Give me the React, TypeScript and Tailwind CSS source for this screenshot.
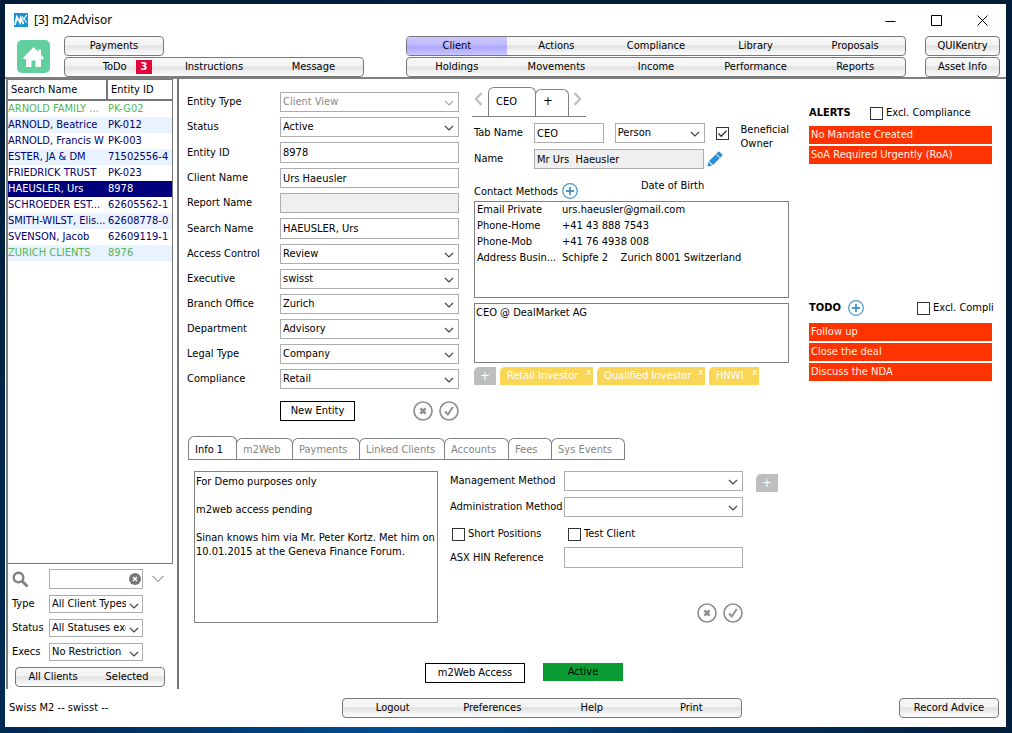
import { useId, useState, type ReactNode } from "react";

const clients = [
    { name: "ARNOLD FAMILY ...", id: "PK-G02", group: true },
    { name: "ARNOLD, Beatrice", id: "PK-012" },
    { name: "ARNOLD, Francis W", id: "PK-003" },
    { name: "ESTER, JA & DM", id: "71502556-4" },
    { name: "FRIEDRICK TRUST", id: "PK-023" },
    { name: "HAEUSLER, Urs", id: "8978" },
    { name: "SCHROEDER EST...", id: "62605562-1" },
    { name: "SMITH-WILST, Elis...", id: "62608778-0" },
    { name: "SVENSON, Jacob", id: "62609119-1" },
    { name: "ZURICH CLIENTS", id: "8976", group: true },
];

const contacts = [
    ["Email Private", "urs.haeusler@gmail.com"],
    ["Phone-Home", "+41 43 888 7543"],
    ["Phone-Mob", "+41 76 4938 008"],
    ["Address Busin...", "Schipfe 2    Zurich 8001 Switzerland"],
];

const infoTabs = [
    { label: "Info 1", width: "w-[49px]" },
    { label: "m2Web", width: "w-[57px]" },
    { label: "Payments", width: "w-[68px]" },
    { label: "Linked Clients", width: "w-[86px]" },
    { label: "Accounts", width: "w-[65px]" },
    { label: "Fees", width: "w-[44px]" },
    { label: "Sys Events", width: "w-[74px]" },
];

const silver = "bg-[linear-gradient(to_bottom,#f8f8f8_0%,#f3f3f3_42%,#e1e1e1_50%,#f0f0f0_75%,#fcfcfc_100%)]";

function ButtonBar({ items, active, badge }: { items: string[]; active?: string; badge?: number }) {
    return (
        <div className={`flex h-5 overflow-hidden rounded-[4px] border border-[#777] ${silver}`}>
            {items.map((item, i) => (
                <button
                    key={item}
                    className={`relative flex-1 whitespace-nowrap ${item === active ? "bg-[linear-gradient(to_bottom,#c9c6ff_0%,#c1bdff_40%,#aca7fd_55%,#c8c5ff_100%)]" : ""}`}
                >
                    {item}
                    {badge && i === 0 && (
                        <span className="absolute left-[71px] top-0.5 h-3.5 w-4 bg-[#e2063c] text-center font-bold leading-[14px] text-white">{badge}</span>
                    )}
                </button>
            ))}
        </div>
    );
}

function Chevron({ className = "" }: { className?: string }) {
    return (
        <svg viewBox="0 0 10 6" className={`h-1.5 w-2.5 ${className}`} fill="none" stroke="currentColor" strokeWidth="1.2">
            <path d="M1 1l4 4 4-4" />
        </svg>
    );
}

function Select({ id, value, disabled, small }: { id?: string; value: string; disabled?: boolean; small?: boolean }) {
    return (
        <div className={`relative w-full ${disabled ? "text-[#8a8a8a]" : "text-black"}`}>
            <select
                id={id}
                disabled={disabled}
                defaultValue={value}
                aria-label={id ? undefined : value || "Options"}
                className={`block w-full appearance-none border border-[#adadad] bg-white pl-0.5 opacity-100 ${small ? "h-[18px] pr-4" : "h-5 pr-5"}`}
            >
                <option>{value}</option>
            </select>
            <Chevron className={`pointer-events-none absolute top-2 ${small ? "right-1" : "right-[5px]"} ${disabled ? "text-[#aaa]" : "text-[#444]"}`} />
        </div>
    );
}

function TextInput({ id, value = "", grey, tall }: { id: string; value?: string; grey?: boolean; tall?: boolean }) {
    return (
        <input
            id={id}
            defaultValue={value}
            readOnly={grey}
            className={`block w-full border border-[#adadad] px-0.5 outline-none ${tall ? "h-[21px]" : "h-5"} ${grey ? "bg-[#efefef]" : "bg-white"}`}
        />
    );
}

function Check({ label, checked = false, children }: { label: string; checked?: boolean; children?: ReactNode }) {
    return (
        <label className={`flex gap-[3px] whitespace-nowrap ${children ? "items-start" : "items-center"}`}>
            <span className={`relative h-[13px] w-[13px] shrink-0 ${children ? "mt-1" : ""}`}>
                <input type="checkbox" defaultChecked={checked} aria-label={label} className="peer block h-[13px] w-[13px] appearance-none border border-[#333] bg-white" />
                <svg viewBox="0 0 13 13" className="pointer-events-none absolute inset-0 hidden h-[13px] w-[13px] peer-checked:block" fill="none" stroke="#333" strokeWidth="1.3">
                    <path d="M2.5 6.5l2.7 2.8L10.5 3.8" />
                </svg>
            </span>
            {children ?? label}
        </label>
    );
}

function Field({ label, value, type = "select", tall }: { label: string; value?: string; type?: "select" | "text" | "readonly" | "disabled"; tall?: boolean }) {
    const id = useId();
    return (
        <div className="flex items-center">
            <label htmlFor={id} className="w-[93px] shrink-0">{label}</label>
            {type === "select" || type === "disabled" ? (
                <Select id={id} value={value ?? ""} disabled={type === "disabled"} />
            ) : (
                <TextInput id={id} value={value} grey={type === "readonly"} tall={tall} />
            )}
        </div>
    );
}

function CancelConfirm() {
    return (
        <div className="flex gap-1.5">
            <button aria-label="Cancel">
                <svg viewBox="0 0 20 20" className="h-5 w-5" fill="none" stroke="#8f8f8f">
                    <circle cx="10" cy="10" r="9" strokeWidth="1.7" />
                    <path d="M7.4 7.4l5.2 5.2M12.6 7.4l-5.2 5.2" strokeWidth="2.6" />
                </svg>
            </button>
            <button aria-label="Confirm">
                <svg viewBox="0 0 20 20" className="h-5 w-5" fill="none" stroke="#8f8f8f">
                    <circle cx="10" cy="10" r="9" strokeWidth="1.7" />
                    <path d="M6 10.5l2.8 3L13.8 6" strokeWidth="1.9" />
                </svg>
            </button>
        </div>
    );
}

function AddCircle({ label }: { label: string }) {
    return (
        <button aria-label={label}>
            <svg viewBox="0 0 16 16" className="h-4 w-4" fill="none" stroke="#4795c9">
                <circle cx="8" cy="8" r="7.3" strokeWidth="1.2" />
                <path d="M8 4v8M4 8h8" strokeWidth="1.8" />
            </svg>
        </button>
    );
}

function AddTag() {
    return <button aria-label="Add" className="h-[18px] w-[22px] rounded-tl-[5px] bg-[#bebebe] text-[13px] leading-[18px] text-white">+</button>;
}

function Tag({ label, width }: { label: string; width: string }) {
    return (
        <div className={`relative h-[18px] shrink-0 rounded-tl-[5px] bg-[#fad657] pl-[7px] leading-[17px] text-white ${width}`}>
            {label}
            <button aria-label={`Remove ${label}`} className="absolute right-0.5 top-0 text-[9px] leading-[10px]">x</button>
        </div>
    );
}

function AlertList({ items }: { items: string[] }) {
    return (
        <ul className="flex flex-col gap-0.5">
            {items.map((item) => (
                <li key={item} className="h-[18px] truncate bg-[#ff3300] pl-0.5 leading-[18px] text-[#fff1e6]">{item}</li>
            ))}
        </ul>
    );
}

function TitleBar() {
    return (
        <header className="flex h-8 items-center pl-[9px] pr-px font-['Noto_Sans',sans-serif] text-xs">
            <svg viewBox="0 0 14 14" className="h-3.5 w-3.5">
                <rect width="14" height="14" fill="#1394d6" />
                <path d="M1 12l1.8-8L6 9.5 6.7 5l2.8 6" fill="none" stroke="#fff" strokeWidth="1.8" />
                <path d="M8 3.2l1.5 3 3.5-4.4M10.4 6.2l2.3 3.6" fill="none" stroke="#fff" strokeWidth="1.1" />
            </svg>
            <h1 className="ml-1.5 flex-1">[3] m2Advisor</h1>
            <button aria-label="Minimize" className="flex w-[46px] justify-center">
                <svg viewBox="0 0 11 11" className="h-[11px] w-[11px]" stroke="#000"><path d="M.5 6.5h10" /></svg>
            </button>
            <button aria-label="Maximize" className="flex w-[46px] justify-center">
                <svg viewBox="0 0 11 11" className="h-[11px] w-[11px]" fill="none" stroke="#000"><path d="M.5 .5h10v10H.5z" /></svg>
            </button>
            <button aria-label="Close" className="flex w-[46px] justify-center">
                <svg viewBox="0 0 11 11" className="h-[11px] w-[11px]" stroke="#000"><path d="M.5 .5l10 10M10.5 .5l-10 10" /></svg>
            </button>
        </header>
    );
}

function Toolbar() {
    return (
        <nav className="flex items-start border-b-2 border-[#808080] pl-3 pr-1.5">
            <button aria-label="Home" className="mt-1">
                <svg viewBox="0 0 33 33" className="h-[33px] w-[33px]">
                    <rect width="33" height="33" rx="5" fill="#62cf9f" />
                    <path d="M16.5 7L6 18l1.5 1.500L9 18.200V27h5.500v-6.500h4V27H24v-8.800l1.500 1.300L27 18l-3-3V9.500h-2.500v2.500z" fill="#fff" />
                </svg>
            </button>
            <div className="ml-3.5 flex w-[300px] shrink-0 flex-col gap-px">
                <div className="w-[100px]"><ButtonBar items={["Payments"]} /></div>
                <ButtonBar items={["ToDo", "Instructions", "Message"]} badge={3} />
            </div>
            <div className="ml-[42px] flex flex-1 flex-col gap-px">
                <ButtonBar items={["Client", "Actions", "Compliance", "Library", "Proposals"]} active="Client" />
                <ButtonBar items={["Holdings", "Movements", "Income", "Performance", "Reports"]} />
            </div>
            <div className="ml-[19px] flex w-[75px] shrink-0 flex-col gap-px">
                <ButtonBar items={["QUIKentry"]} />
                <ButtonBar items={["Asset Info"]} />
            </div>
        </nav>
    );
}

function FilterRow({ label, value }: { label: string; value: string }) {
    const id = useId();
    return (
        <div className="flex items-center">
            <label htmlFor={id} className="w-[37px] shrink-0">{label}</label>
            <div className="w-[94px] overflow-hidden"><Select id={id} value={value} small /></div>
        </div>
    );
}

function Sidebar() {
    const [selected, setSelected] = useState("8978");
    return (
        <aside className="ml-px flex w-[167px] shrink-0 flex-col border-l-2 border-[#808080]">
            <div className="flex-1 border border-l-0 border-[#777] pb-2">
                <table className="w-full table-fixed border-collapse">
                    <thead>
                        <tr className="h-5 border-b-2 border-[#777] text-left">
                            <th className="w-[99px] border-r-2 border-[#777] pl-[3px] font-normal">Search Name</th>
                            <th className="pl-[3px] font-normal">Entity ID</th>
                        </tr>
                    </thead>
                    <tbody>
                        {clients.map((c, i) => (
                            <tr
                                key={c.id}
                                onClick={() => setSelected(c.id)}
                                className={`h-4 leading-4 ${c.id === selected ? "bg-[#00007c] text-white" : `${i % 2 ? "bg-[#e8f3ff]" : "bg-white"} ${c.group ? "text-[#55b555]" : "text-[#00006e]"}`}`}
                            >
                                <td className="whitespace-nowrap p-0">{c.name}</td>
                                <td className="whitespace-nowrap p-0 pl-px">{c.id}</td>
                            </tr>
                        ))}
                    </tbody>
                </table>
            </div>
            <div className="flex flex-col gap-1.5 pb-0.5 pl-1 pt-[5px]">
                <div className="flex items-center">
                    <svg viewBox="0 0 17 17" className="h-[17px] w-[17px]" fill="none" stroke="#808080">
                        <circle cx="6.5" cy="6.5" r="4.8" strokeWidth="2.4" />
                        <path d="M10.3 10.3L15.5 15.5" strokeWidth="3" />
                    </svg>
                    <div className="relative ml-5 w-[94px]">
                        <input aria-label="Search clients" className="block h-5 w-full border border-[#adadad] bg-white pl-0.5 pr-4" />
                        <button aria-label="Clear search" className="absolute right-0.5 top-1">
                            <svg viewBox="0 0 12 12" className="h-3 w-3" stroke="#fff">
                                <circle cx="6" cy="6" r="6" fill="#777" stroke="none" />
                                <path d="M4 4l4 4M8 4l-4 4" strokeWidth="1.5" />
                            </svg>
                        </button>
                    </div>
                    <button aria-label="More filters" className="ml-[9px]">
                        <svg viewBox="0 0 12 8" className="h-2 w-3" fill="none" stroke="#666"><path d="M.5 1L6 6.500 11.500 1" /></svg>
                    </button>
                </div>
                <FilterRow label="Type" value="All Client Types" />
                <FilterRow label="Status" value="All Statuses exc" />
                <FilterRow label="Execs" value="No Restriction" />
                <div className="ml-[3px] w-[150px]"><ButtonBar items={["All Clients", "Selected"]} /></div>
            </div>
        </aside>
    );
}

function EntityForm() {
    return (
        <section className="flex w-[272px] shrink-0 flex-col gap-[5px]">
            <Field label="Entity Type" value="Client View" type="disabled" />
            <Field label="Status" value="Active" />
            <Field label="Entity ID" value="8978" type="text" tall />
            <Field label="Client Name" value="Urs Haeusler" type="text" />
            <Field label="Report Name" type="readonly" />
            <Field label="Search Name" value="HAEUSLER, Urs" type="text" tall />
            <Field label="Access Control" value="Review" />
            <Field label="Executive" value="swisst" />
            <Field label="Branch Office" value="Zurich" />
            <Field label="Department" value="Advisory" />
            <Field label="Legal Type" value="Company" />
            <Field label="Compliance" value="Retail" />
            <div className="mt-[7px] flex items-center justify-between pl-[93px]">
                <button className="h-5 w-[75px] border border-black">New Entity</button>
                <CancelConfirm />
            </div>
        </section>
    );
}

function ContactPanel() {
    return (
        <section className="-mt-[5px] ml-[13px] min-w-0 flex-[317]">
            <div className="flex w-[114px] items-end border-b border-[#808080]">
                <button aria-label="Previous tab" className="mb-2.5 ml-0.5 w-3.5">
                    <svg viewBox="0 0 9 14" className="h-3.5 w-[9px]" fill="none" stroke="#c2c2c2" strokeWidth="2.5"><path d="M7.5 1L2 7l5.5 6" /></svg>
                </button>
                <button className="h-[29px] w-12 rounded-t-[6px] border border-b-0 border-[#808080] pl-[7px] text-left">CEO</button>
                <button className="-ml-px h-[27px] w-[34px] rounded-t-[6px] border border-b-0 border-[#808080] pb-1 pl-[7px] text-left text-[13px]">+</button>
                <button aria-label="Next tab" className="mb-2.5 ml-1">
                    <svg viewBox="0 0 9 14" className="h-3.5 w-[9px]" fill="none" stroke="#c2c2c2" strokeWidth="2.5"><path d="M1.5 1L7 7l-5.5 6" /></svg>
                </button>
            </div>
            <div className="mt-1.5 flex items-start pl-0.5">
                <label htmlFor="tab-name" className="w-[60px] shrink-0 leading-5">Tab Name</label>
                <div className="w-[70px]"><TextInput id="tab-name" value="CEO" /></div>
                <div className="ml-[11px] w-[90px]"><Select value="Person" /></div>
                <div className="ml-[11px] h-[26px]">
                    <Check label="Beneficial Owner" checked>
                        <span className="ml-[9px] whitespace-normal leading-[14px]">Beneficial<br />Owner</span>
                    </Check>
                </div>
            </div>
            <div className="flex items-center pl-0.5">
                <label htmlFor="person-name" className="w-[60px] shrink-0">Name</label>
                <div className="w-[170px]"><TextInput id="person-name" value="Mr Urs  Haeusler" grey /></div>
                <button aria-label="Edit name" className="ml-[3px]">
                    <svg viewBox="0 0 16 16" className="h-4 w-4" fill="#2f8fd8">
                        <path d="M.5 15.500l1-4.700 3.700 3.700z" />
                        <path d="M2 10l6.800-6.800 4 4L6 14z" />
                        <path d="M9.300 2.700L11.200.8q.6-.6 1.200 0l2.800 2.800q.6.600 0 1.200l-1.900 1.900z" />
                    </svg>
                </button>
            </div>
            <div className="flex h-8 items-end pb-0.5 pl-0.5">
                <h2 className="mr-1">Contact Methods</h2>
                <AddCircle label="Add contact method" />
                <span className="mb-1.5 ml-[63px]">Date of Birth</span>
            </div>
            <div className="ml-0.5 h-[97px] overflow-hidden border border-[#808080]">
                <table className="w-full border-collapse">
                    <tbody>
                        {contacts.map(([kind, value]) => (
                            <tr key={kind} className="h-4 leading-4">
                                <td className="w-[87px] whitespace-nowrap p-0 pl-0.5">{kind}</td>
                                <td className="whitespace-pre p-0">{value}</td>
                            </tr>
                        ))}
                    </tbody>
                </table>
            </div>
            <div className="ml-0.5 mt-[5px]">
                <textarea aria-label="Position" defaultValue="CEO @ DealMarket AG" className="block h-[60px] w-full resize-none border border-[#808080] px-px py-0.5 leading-[14px]" />
            </div>
            <div className="ml-0.5 mt-1 flex gap-1">
                <AddTag />
                <Tag label="Retail Investor" width="w-[93px]" />
                <Tag label="Qualified Investor" width="w-[108px]" />
                <Tag label="HNWI" width="w-[50px]" />
            </div>
        </section>
    );
}

function AlertsPanel() {
    return (
        <section className="ml-5 mt-3.5 min-w-0 flex-[183]">
            <div className="mb-1.5 flex h-3.5 items-center">
                <h2 className="w-[61px] shrink-0 font-bold">ALERTS</h2>
                <Check label="Excl. Compliance" />
            </div>
            <AlertList items={["No Mandate Created", "SoA Required Urgently (RoA)"]} />
            <div className="mb-[7px] mt-[136px] flex h-4 items-center">
                <h2 className="w-[39px] shrink-0 font-bold">TODO</h2>
                <AddCircle label="Add to do" />
                <div className="ml-[53px]"><Check label="Excl. Compli" /></div>
            </div>
            <AlertList items={["Follow up", "Close the deal", "Discuss the NDA"]} />
        </section>
    );
}

function InfoTabs() {
    const [tab, setTab] = useState("Info 1");
    const ids = { management: useId(), administration: useId(), asx: useId() };
    return (
        <section className="mt-[15px]">
            <div className="ml-px flex w-fit items-end border-b border-[#808080]">
                {infoTabs.map((t, i) => (
                    <button
                        key={t.label}
                        onClick={() => setTab(t.label)}
                        className={`rounded-t-[6px] border border-b-0 border-[#808080] pl-1.5 text-left whitespace-nowrap ${t.width} ${i ? "-ml-px" : ""} ${t.label === tab ? "h-[23px] pt-1 text-black" : "h-[21px] pt-0.5 text-[#868686]"}`}
                    >
                        {t.label}
                    </button>
                ))}
            </div>
            <div className="mt-[11px] flex pl-[7px]">
                <textarea
                    aria-label="Notes"
                    className="h-[152px] w-[244px] resize-none border border-[#808080] py-[3px] pl-px leading-[14px]"
                    defaultValue={"For Demo purposes only\n\nm2web access pending\n\nSinan knows him via Mr. Peter Kortz. Met him on 10.01.2015 at the Geneva Finance Forum."}
                />
                <div className="ml-3 flex w-[293px] flex-col">
                    <div className="flex items-center">
                        <label htmlFor={ids.management} className="w-[114px] shrink-0">Management Method</label>
                        <Select id={ids.management} value="" />
                    </div>
                    <div className="mt-1.5 flex items-center">
                        <label htmlFor={ids.administration} className="w-[114px] shrink-0 whitespace-nowrap">Administration Method</label>
                        <Select id={ids.administration} value="" />
                    </div>
                    <div className="mb-1.5 mt-2.5 flex h-3.5 items-center pl-0.5">
                        <div className="w-[116px]"><Check label="Short Positions" /></div>
                        <Check label="Test Client" />
                    </div>
                    <div className="flex items-center">
                        <label htmlFor={ids.asx} className="w-[114px] shrink-0">ASX HIN Reference</label>
                        <TextInput id={ids.asx} tall />
                    </div>
                    <div className="mt-auto self-end"><CancelConfirm /></div>
                </div>
                <div className="ml-[13px] mt-[3px]"><AddTag /></div>
            </div>
            <div className="mt-10 flex items-start pl-[238px]">
                <button className="h-5 w-[100px] border border-black">m2Web Access</button>
                <button className="ml-[18px] h-[18px] w-20 bg-[#0a9b33]">Active</button>
            </div>
        </section>
    );
}

export default function App() {
    return (
        <div className="flex min-h-screen bg-[#002040] bg-[radial-gradient(ellipse_at_40%_100%,#004f96_0%,#00305e_35%,#001c38_75%)] pb-1.5 pl-[5px] pr-1.5 pt-1 font-['DejaVu_Sans_Condensed','DejaVu_Sans',sans-serif] text-[11px] leading-[14px] text-black">
            <div className="flex min-w-0 flex-1 flex-col bg-white">
                <TitleBar />
                <Toolbar />
                <div className="flex flex-1">
                    <Sidebar />
                    <main className="ml-1 min-w-0 flex-1 border-l-2 border-[#777] pb-1.5 pl-2 pr-3.5 pt-[13px]">
                        <div className="flex">
                            <EntityForm />
                            <ContactPanel />
                            <AlertsPanel />
                        </div>
                        <InfoTabs />
                    </main>
                </div>
                <footer className="flex h-[38px] items-center pl-1 pr-[7px]">
                    <p className="w-[333px] shrink-0">Swiss M2 -- swisst --</p>
                    <div className="w-[400px]"><ButtonBar items={["Logout", "Preferences", "Help", "Print"]} /></div>
                    <div className="ml-auto w-[100px]"><ButtonBar items={["Record Advice"]} /></div>
                </footer>
            </div>
        </div>
    );
}
